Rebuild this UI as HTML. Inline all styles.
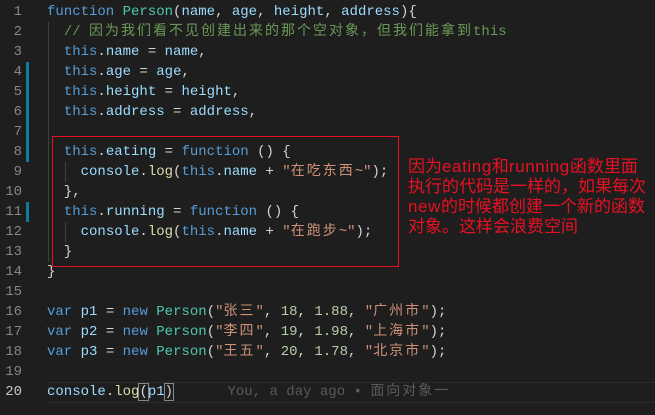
<!DOCTYPE html>
<html><head><meta charset="utf-8"><style>
body{margin:0;width:655px;height:415px;background:#1e1e1e;overflow:hidden;position:relative;font-family:"Liberation Mono","Noto Sans CJK SC",monospace;font-size:14px;}
.l{position:absolute;left:0;height:20px;line-height:20px;white-space:pre;width:655px}
.n{position:absolute;left:0;width:22px;text-align:right;color:#858585}
.c{position:absolute;left:47px;color:#d4d4d4}
.k{color:#569cd6}.p{color:#9cdcfe}.t{color:#4ec9b0}.s{color:#ce9178}.m{color:#b5cea8}.g{color:#6a9955}.f{color:#dcdcaa}
.z{letter-spacing:2px}
.bar{position:absolute;left:26px;width:3px;background:#0c7d9d}
.ig{position:absolute;width:1px;background:#404040}
.e{letter-spacing:0.6px}
</style></head><body>
<div class="ig" style="left:48px;top:22px;height:240px"></div>
<div class="ig" style="left:65px;top:162px;height:20px"></div>
<div class="ig" style="left:65px;top:222px;height:20px"></div>
<div class="bar" style="top:62px;height:80px"></div>
<div class="bar" style="top:142px;height:20px"></div>
<div class="bar" style="top:202px;height:20px"></div>
<div style="position:absolute;left:47px;top:382px;width:608px;height:19px;border-top:1px solid #2c2c2c;border-bottom:1px solid #2c2c2c"></div>

<div class="l" style="top:2px"><span class="n">1</span><span class="c"><span class="k">function</span> <span class="t">Person</span>(<span class="p">name</span>, <span class="p">age</span>, <span class="p">height</span>, <span class="p">address</span>){</span></div>
<div class="l" style="top:22px"><span class="n">2</span><span class="c">  <span class="g">// <span class="z">因为我们看不见创建出来的那个空对象，但我们能拿到</span>this</span></span></div>
<div class="l" style="top:42px"><span class="n">3</span><span class="c">  <span class="k">this</span>.<span class="p">name</span> = <span class="p">name</span>,</span></div>
<div class="l" style="top:62px"><span class="n">4</span><span class="c">  <span class="k">this</span>.<span class="p">age</span> = <span class="p">age</span>,</span></div>
<div class="l" style="top:82px"><span class="n">5</span><span class="c">  <span class="k">this</span>.<span class="p">height</span> = <span class="p">height</span>,</span></div>
<div class="l" style="top:102px"><span class="n">6</span><span class="c">  <span class="k">this</span>.<span class="p">address</span> = <span class="p">address</span>,</span></div>
<div class="l" style="top:122px"><span class="n">7</span></div>
<div class="l" style="top:142px"><span class="n">8</span><span class="c">  <span class="k">this</span>.<span class="p">eating</span> = <span class="k">function</span> () {</span></div>
<div class="l" style="top:162px"><span class="n">9</span><span class="c">    <span class="p">console</span>.<span class="f">log</span>(<span class="k">this</span>.<span class="p">name</span> + <span class="s">"<span class="z">在吃东西</span>~"</span>);</span></div>
<div class="l" style="top:182px"><span class="n">10</span><span class="c">  },</span></div>
<div class="l" style="top:202px"><span class="n">11</span><span class="c">  <span class="k">this</span>.<span class="p">running</span> = <span class="k">function</span> () {</span></div>
<div class="l" style="top:222px"><span class="n">12</span><span class="c">    <span class="p">console</span>.<span class="f">log</span>(<span class="k">this</span>.<span class="p">name</span> + <span class="s">"<span class="z">在跑步</span>~"</span>);</span></div>
<div class="l" style="top:242px"><span class="n">13</span><span class="c">  }</span></div>
<div class="l" style="top:262px"><span class="n">14</span><span class="c">}</span></div>
<div class="l" style="top:282px"><span class="n">15</span></div>
<div class="l" style="top:302px"><span class="n">16</span><span class="c"><span class="k">var</span> <span class="p">p1</span> = <span class="k">new</span> <span class="t">Person</span>(<span class="s">"<span class="z">张三</span>"</span>, <span class="m">18</span>, <span class="m">1.88</span>, <span class="s">"<span class="z">广州市</span>"</span>);</span></div>
<div class="l" style="top:322px"><span class="n">17</span><span class="c"><span class="k">var</span> <span class="p">p2</span> = <span class="k">new</span> <span class="t">Person</span>(<span class="s">"<span class="z">李四</span>"</span>, <span class="m">19</span>, <span class="m">1.98</span>, <span class="s">"<span class="z">上海市</span>"</span>);</span></div>
<div class="l" style="top:342px"><span class="n">18</span><span class="c"><span class="k">var</span> <span class="p">p3</span> = <span class="k">new</span> <span class="t">Person</span>(<span class="s">"<span class="z">王五</span>"</span>, <span class="m">20</span>, <span class="m">1.78</span>, <span class="s">"<span class="z">北京市</span>"</span>);</span></div>
<div class="l" style="top:362px"><span class="n">19</span></div>
<div class="l" style="top:382px"><span class="n" style="color:#c6c6c6">20</span><span class="c"><span class="p">console</span>.<span class="f">log</span><span style="outline:1px solid #888">(</span><span class="p">p1</span><span style="outline:1px solid #888">)</span>      <span style="color:#5a5a5a;padding-left:4px">You, a day ago • <span class="z">面向对象一</span></span></span></div>

<div style="position:absolute;left:52px;top:136px;width:345px;height:129px;border:1px solid #e81123"></div>
<div style="position:absolute;left:408px;top:157px;white-space:nowrap;font-family:'Liberation Sans','Noto Sans CJK SC',sans-serif;font-size:17px;line-height:20px;color:#e81123">因为<span class="e">eating</span>和<span class="e">running</span>函数里面<br>执行的代码是一样的，如果每次<br><span class="e">new</span>的时候都创建一个新的函数<br>对象。这样会浪费空间</div>
</body></html>
